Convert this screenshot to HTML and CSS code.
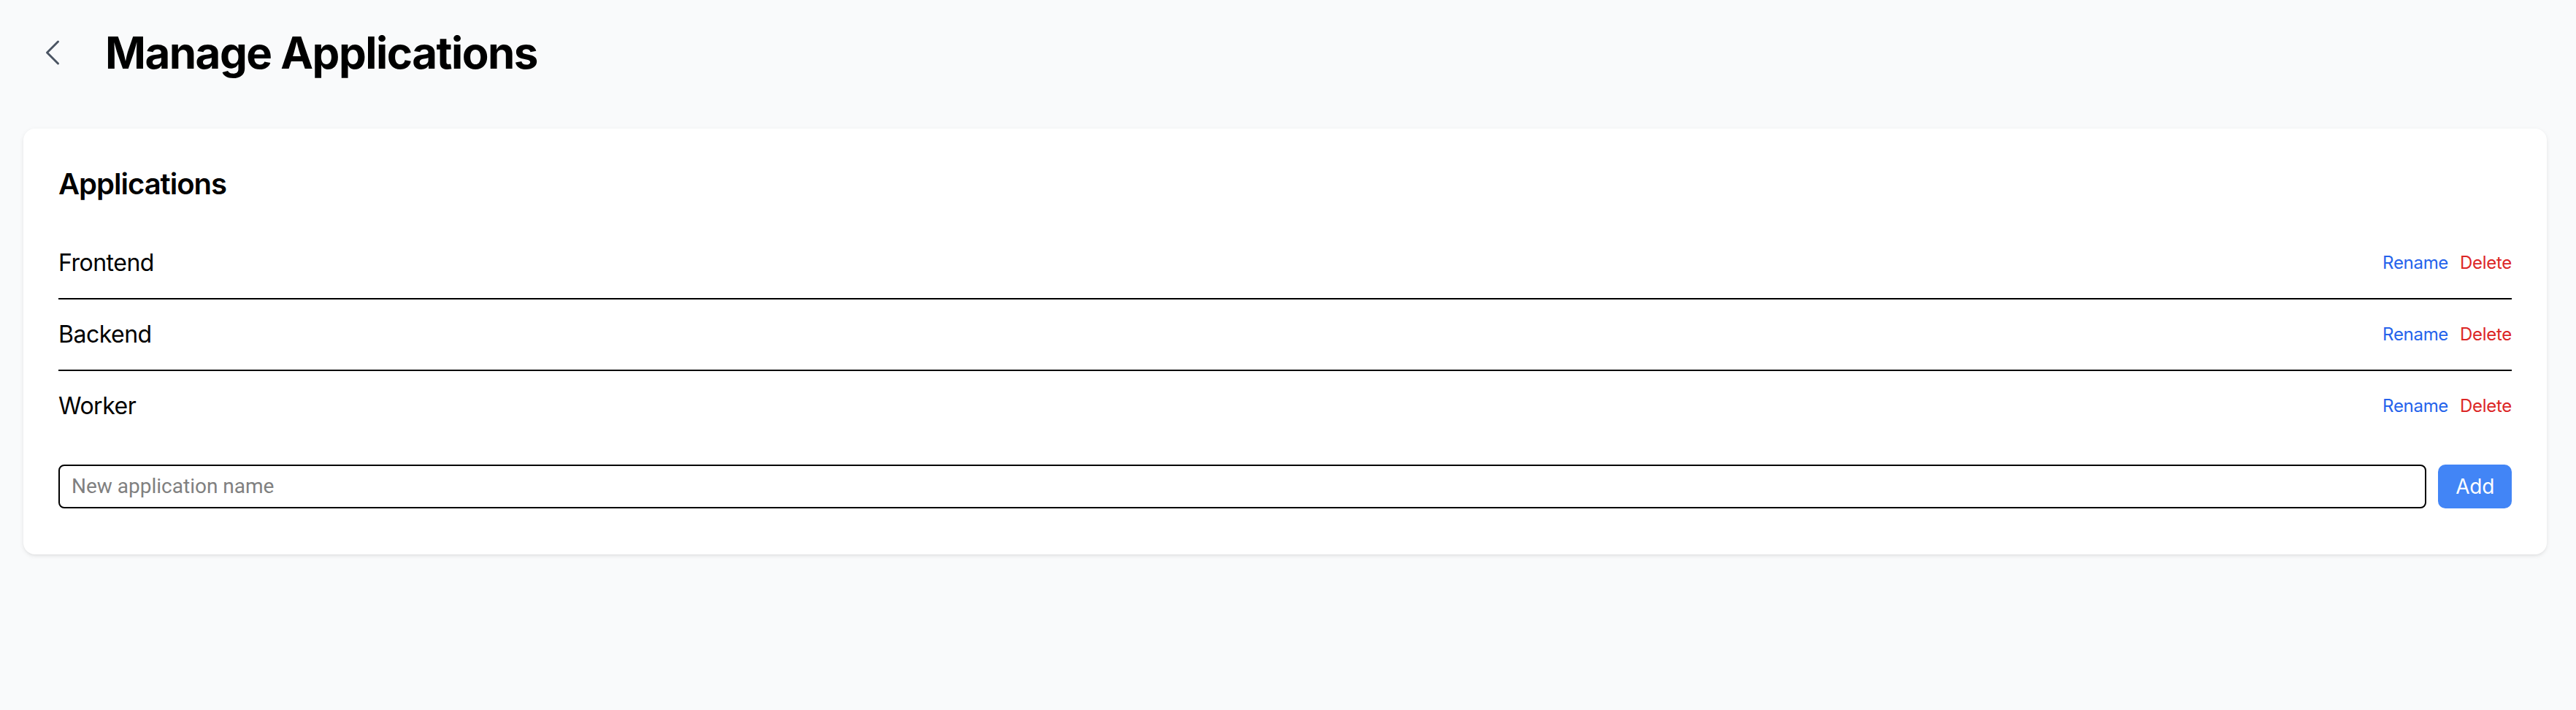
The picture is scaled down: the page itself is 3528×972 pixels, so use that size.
FILE: index.html
```html
<!DOCTYPE html>
<html lang="en">
<head>
<meta charset="utf-8">
<title>Manage Applications</title>
<link rel="stylesheet" href="styles.css">
</head>
<body>
<div class="page">
  <header class="header">
    <button class="back" type="button" aria-label="Back">
      <svg viewBox="0 0 24 24" fill="none" stroke="currentColor" stroke-width="1.5" stroke-linecap="round" stroke-linejoin="round"><path d="M15.75 19.5 8.25 12l7.5-7.5"/></svg>
    </button>
    <h1 class="title">Manage Applications</h1>
  </header>
  <section class="card">
    <h2 class="card-title">Applications</h2>
    <ul class="app-list">
      <li class="app-row"><span class="app-name">Frontend</span><div class="actions"><button class="link rename" type="button">Rename</button><button class="link delete" type="button">Delete</button></div></li>
      <li class="app-row"><span class="app-name">Backend</span><div class="actions"><button class="link rename" type="button">Rename</button><button class="link delete" type="button">Delete</button></div></li>
      <li class="app-row"><span class="app-name">Worker</span><div class="actions"><button class="link rename" type="button">Rename</button><button class="link delete" type="button">Delete</button></div></li>
    </ul>
    <form class="add-form">
      <input class="add-input" type="text" placeholder="New application name">
      <button class="add-btn" type="button">Add</button>
    </form>
  </section>
</div>
</body>
</html>
```
FILE: styles.css
```css
* { box-sizing: border-box; }
html, body { margin: 0; padding: 0; }
body {
  background: #f9fafb;
  font-family: Inter, "Noto Sans", sans-serif;
  color: #000;
}
.page { padding: 32px 40px 32px 32px; }
.header {
  display: flex;
  align-items: center;
  gap: 32px;
  margin-bottom: 64px;
}
.back {
  display: flex;
  padding: 16px;
  border: none;
  background: none;
  color: #4b5563;
  cursor: pointer;
}
.back svg { width: 48px; height: 48px; display: block; }
.title {
  margin: 0;
  font-size: 60px;
  line-height: 72px;
  font-weight: 700;
  letter-spacing: -1.5px;
}
.card {
  background: #fff;
  border-radius: 16px;
  box-shadow: 0 2px 6px rgba(0,0,0,0.08), 0 2px 4px -2px rgba(0,0,0,0.08);
  padding: 48px 48px 63px;
}
.card-title {
  margin: 0 0 32px;
  font-size: 40px;
  line-height: 56px;
  font-weight: 600;
  letter-spacing: -1px;
}
.app-list { list-style: none; margin: 0; padding: 0; }
.app-row {
  display: flex;
  justify-content: space-between;
  align-items: center;
  padding: 24px 0;
  border-bottom: 2px solid #000;
}
.app-row:last-child { border-bottom: none; }
.app-name { font-size: 32px; line-height: 48px; letter-spacing: -0.5px; }
.actions { display: flex; gap: 16px; }
.link {
  border: none;
  background: none;
  padding: 0;
  font-family: inherit;
  font-size: 24px;
  line-height: 32px;
  letter-spacing: -0.3px;
  cursor: pointer;
}
.rename { color: #2563eb; }
.delete { color: #dc2626; }
.add-form {
  display: flex;
  gap: 16px;
  margin-top: 32px;
}
.add-input {
  flex: 1;
  border: 2px solid #000;
  border-radius: 8px;
  padding: 8px 16px;
  font-family: Roboto, sans-serif;
  font-size: 28px;
  line-height: 40px;
  color: #000;
  background: #fff;
}
.add-input::placeholder { color: #808080; }
.add-btn {
  border: none;
  border-radius: 10px;
  background: #4285f6;
  color: #fff;
  padding: 10px 24px;
  font-family: inherit;
  font-size: 28px;
  line-height: 40px;
  letter-spacing: -0.3px;
  cursor: pointer;
}
```
